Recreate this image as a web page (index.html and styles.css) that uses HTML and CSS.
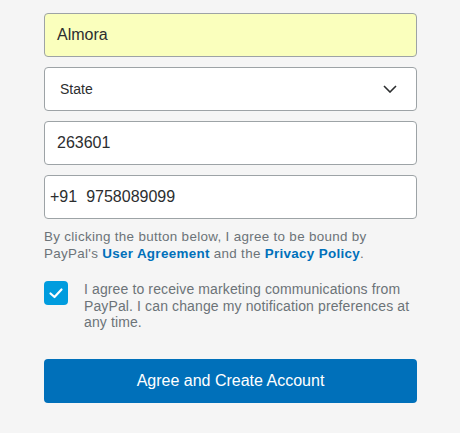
FILE: index.html
```html
<!DOCTYPE html>
<html lang="en">
<head>
<meta charset="utf-8">
<title>Create Account</title>
<link rel="stylesheet" href="styles.css">
</head>
<body>
<form class="form">
  <div class="field field--filled"><span class="value">Almora</span></div>
  <div class="field field--select">
    <span class="value value--small">State</span>
    <svg class="chevron" width="14" height="8" viewBox="0 0 14 8"><path d="M1 1 L7 7 L13 1" fill="none" stroke="#2c2e2f" stroke-width="1.6"/></svg>
  </div>
  <div class="field"><span class="value">263601</span></div>
  <div class="field field--phone"><span class="prefix">+91</span><span class="value">9758089099</span></div>
  <p class="legal">By clicking the button below, I agree to be bound by PayPal's <a class="link">User Agreement</a> and the <a class="link">Privacy Policy</a>.</p>
  <div class="consent">
    <span class="checkbox">
      <svg width="24" height="24" viewBox="0 0 24 24"><path d="M6.5 12.5 L10.5 16 L17.5 8.5" fill="none" stroke="#fff" stroke-width="2.2" stroke-linecap="round" stroke-linejoin="round"/></svg>
    </span>
    <p class="consent-text">I agree to receive marketing communications from PayPal. I can change my notification preferences at any time.</p>
  </div>
  <button type="button" class="submit">Agree and Create Account</button>
</form>
</body>
</html>
```
FILE: styles.css
```css
html, body {
  margin: 0;
  padding: 0;
  background: #f5f5f5;
  font-family: "Liberation Sans", Arial, sans-serif;
}
.form {
  width: 373px;
  margin-left: 44px;
  padding-top: 13px;
  display: flex;
  flex-direction: column;
}
.field {
  box-sizing: border-box;
  height: 44px;
  border: 1px solid #9da3a6;
  border-radius: 4px;
  background: #fff;
  display: flex;
  align-items: center;
  padding: 0 12px;
  margin-bottom: 10px;
  color: #2c2e2f;
}
.field--filled {
  background: #faffbd;
}
.field--select {
  justify-content: space-between;
  padding-left: 15px;
  padding-right: 19px;
}
.field--phone {
  padding-left: 5px;
}
.value {
  font-size: 16px;
}
.value--small {
  font-size: 14px;
}
.prefix {
  font-size: 16px;
  margin-right: 9px;
}
.chevron {
  display: block;
}
.legal {
  margin: 0;
  font-size: 13.4px;
  letter-spacing: 0.32px;
  line-height: 16.5px;
  color: #6c7378;
}
.link {
  color: #0070ba;
  font-weight: bold;
  text-decoration: none;
}
.consent {
  display: flex;
  align-items: flex-start;
  margin-top: 19px;
}
.checkbox {
  flex: none;
  width: 24px;
  height: 24px;
  border-radius: 4px;
  background: #009cde;
  display: flex;
}
.consent-text {
  margin: 0 0 0 16px;
  font-size: 14px;
  letter-spacing: 0.12px;
  line-height: 16.5px;
  color: #6c7378;
}
.submit {
  margin-top: 28px;
  height: 44px;
  border: 0;
  border-radius: 4px;
  background: #0070ba;
  color: #fff;
  font-family: "Liberation Sans", Arial, sans-serif;
  font-size: 16px;
  cursor: pointer;
}
```
